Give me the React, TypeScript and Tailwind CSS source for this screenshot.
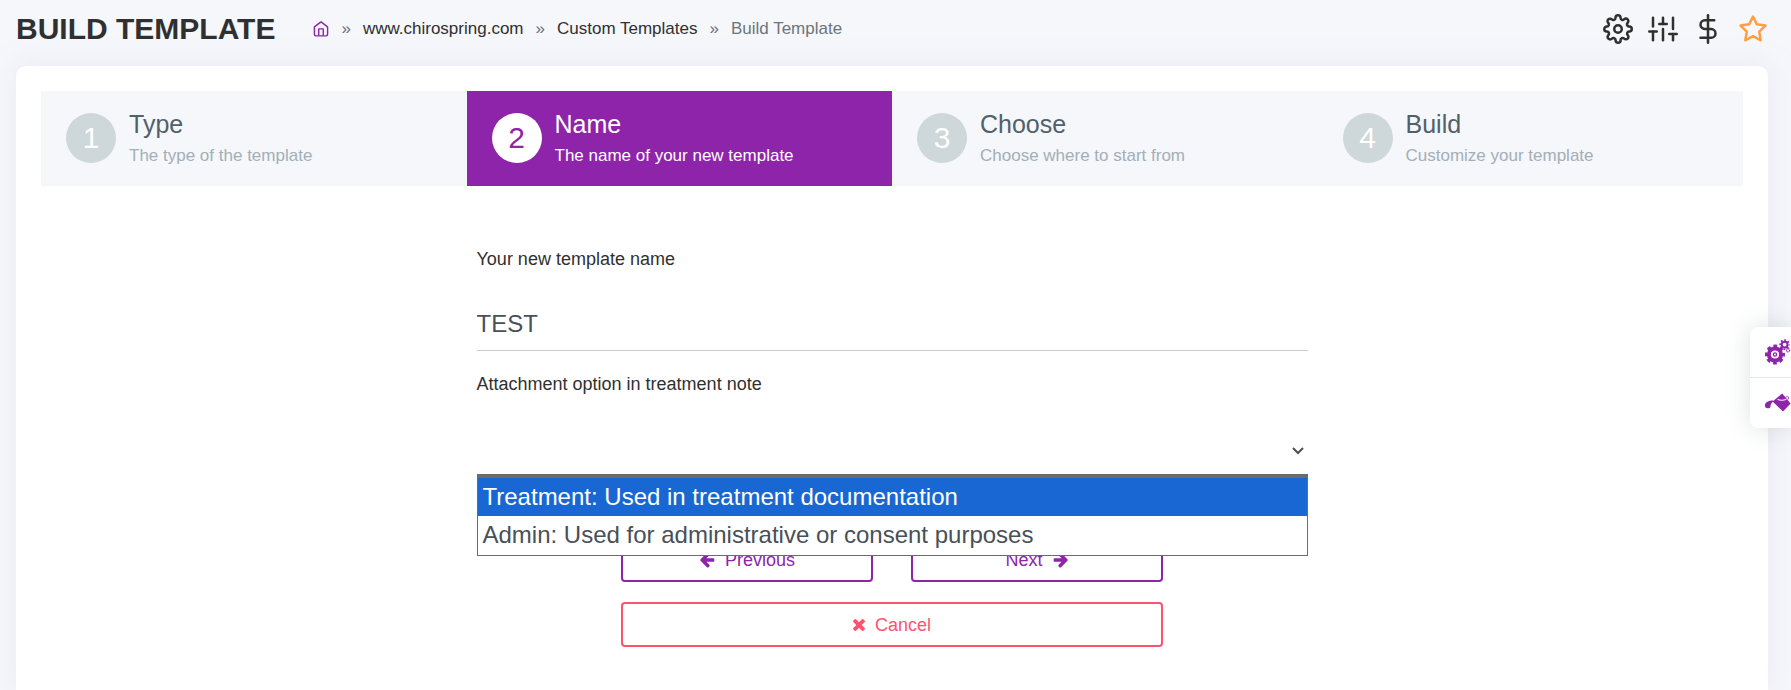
import { useState } from "react";
import { FiDollarSign, FiSettings, FiSliders, FiStar } from "react-icons/fi";

const STEPS = [
  { title: "Type", description: "The type of the template" },
  { title: "Name", description: "The name of your new template" },
  { title: "Choose", description: "Choose where to start from" },
  { title: "Build", description: "Customize your template" },
];

const ATTACHMENT_OPTIONS = [
  { value: "treatment", label: "Treatment: Used in treatment documentation" },
  { value: "admin", label: "Admin: Used for administrative or consent purposes" },
];

function HomeIcon() {
  return (
    <svg viewBox="0 0 16 17" className="size-4" fill="none" stroke="currentColor" strokeWidth="1.5" strokeLinejoin="round">
      <path d="M1 6.2 8 1l7 5.2v8a1.6 1.6 0 0 1-1.6 1.6H2.6A1.6 1.6 0 0 1 1 14.2z" />
      <path d="M5.6 15.8V8.4h4.8v7.4" />
    </svg>
  );
}

function ArrowIcon({ className = "" }: { className?: string }) {
  return (
    <svg viewBox="0 128 1536 1664" className={`size-4 ${className}`} fill="currentColor">
      <path d="M1536 896v128q0 53-32.5 90.5t-84.5 37.5h-704l293 294q38 36 38 90t-38 90l-75 76q-37 37-90 37-52 0-91-37l-651-652q-37-37-37-90 0-52 37-91l651-650q38-38 91-38 52 0 90 38l75 74q38 38 38 91t-38 91l-293 293h704q52 0 84.5 37.5t32.5 90.5z" />
    </svg>
  );
}

function TimesIcon() {
  return (
    <svg viewBox="110 366 1188 1188" className="size-3" fill="currentColor">
      <path d="M1298 1322q0 40-28 68l-136 136q-28 28-68 28t-68-28l-294-294-294 294q-28 28-68 28t-68-28l-136-136q-28-28-28-68t28-68l294-294-294-294q-28-28-28-68t28-68l136-136q28-28 68-28t68 28l294 294 294-294q28-28 68-28t68 28l136 136q28 28 28 68t-28 68l-294 294 294 294q28 28 28 68z" />
    </svg>
  );
}

function GearsIcon() {
  return (
    <svg viewBox="0 0 26 26" className="h-[26px] w-[26px]" fill="none" stroke="currentColor">
      <circle cx="10" cy="15.5" r="8.6" strokeWidth="2.8" strokeDasharray="3.8 2.954" strokeDashoffset="1.9" />
      <circle cx="10" cy="15.5" r="6.1" strokeWidth="4" />
      <circle cx="10" cy="15.5" r="1.6" strokeWidth="1.3" />
      <circle cx="19.6" cy="5.6" r="4.5" strokeWidth="1.6" strokeDasharray="1.8 1.734" strokeDashoffset="0.9" />
      <circle cx="19.6" cy="5.6" r="2.9" strokeWidth="2" />
      <circle cx="23" cy="11.2" r="1.6" strokeWidth="1.2" strokeDasharray="1.2 0.5" />
    </svg>
  );
}

function PaintIcon() {
  return (
    <svg viewBox="0 0 26 20" className="h-5 w-[26px]" fill="currentColor">
      <path d="M7.6 8.5 17.2.6 25.6 10.4 18 18.6z" />
      <path d="M8.2 7.6C3.6 7.6 0 9.6 0 12.4a2.8 2.8 0 0 0 5.6.3c0-1.6 1-3 2.6-4.2z" />
      <path d="M12.6 6.6c3 1 6.4.8 9-.4" fill="none" stroke="white" strokeWidth="1.1" />
      <circle cx="22.2" cy="5" r="1.5" fill="white" stroke="currentColor" strokeWidth="0.7" />
    </svg>
  );
}

function Header() {
  return (
    <header className="flex h-[66px] items-center justify-between pb-2 pl-4 pr-[23px]">
      <div className="flex items-center">
        <h1 className="text-3xl font-bold">BUILD TEMPLATE</h1>
        <nav aria-label="Breadcrumb" className="ml-[38px] flex items-center gap-3 text-[17px]">
          <a href="#home" aria-label="Home" className="text-[#8e24aa]">
            <HomeIcon />
          </a>
          <span className="text-[#6b6f82]">»</span>
          <a href="#site">www.chirospring.com</a>
          <span className="text-[#6b6f82]">»</span>
          <a href="#templates">Custom Templates</a>
          <span className="text-[#6b6f82]">»</span>
          <span className="text-[#6c757d]">Build Template</span>
        </nav>
      </div>
      <div className="flex items-center gap-[15px] text-3xl">
        <button type="button" aria-label="Settings"><FiSettings /></button>
        <button type="button" aria-label="Preferences"><FiSliders /></button>
        <button type="button" aria-label="Billing"><FiDollarSign /></button>
        <button type="button" aria-label="Favorite" className="text-[#ff9f43]"><FiStar /></button>
      </div>
    </header>
  );
}

function Steps({ current }: { current: number }) {
  return (
    <ol className="grid grid-cols-4 bg-[#f5f7fb]">
      {STEPS.map((step, i) => {
        const active = i === current;
        return (
          <li
            key={step.title}
            aria-current={active ? "step" : undefined}
            className={`flex h-[95px] items-center gap-[13px] px-[25px] pb-px ${active ? "bg-[#8e24aa] text-white" : "text-[#526069]"}`}
          >
            <span
              className={`flex size-[50px] shrink-0 items-center justify-center rounded-full pb-px text-3xl ${
                active ? "bg-white text-[#8e24aa]" : "bg-[#ced7d9] text-white"
              }`}
            >
              {i + 1}
            </span>
            <div>
              <div className="text-[25px] leading-9">{step.title}</div>
              <div className={`text-[17px] leading-7 ${active ? "" : "text-[#a3afb7]"}`}>{step.description}</div>
            </div>
          </li>
        );
      })}
    </ol>
  );
}

function AttachmentSelect() {
  const [value, setValue] = useState("");
  const [open, setOpen] = useState(true);
  const [highlighted, setHighlighted] = useState(0);

  return (
    <div className="relative">
      <select
        id="attachment"
        value={value}
        onChange={(e) => setValue(e.target.value)}
        className="block h-[55px] w-full appearance-none border-b-[3px] border-[#6b6b6b] bg-transparent text-2xl text-[#495057] outline-none"
      >
        <option value="" />
        {ATTACHMENT_OPTIONS.map((o) => (
          <option key={o.value} value={o.value}>
            {o.label}
          </option>
        ))}
      </select>
      <svg
        viewBox="0 0 12 8"
        className="pointer-events-none absolute right-1 top-[25px] h-2 w-3"
        fill="none"
        stroke="#495057"
        strokeWidth="2"
      >
        <path d="m1 1 5 5 5-5" />
      </svg>
      {open && (
        <ul role="listbox" className="absolute inset-x-0 top-full z-10 border border-[#6b6b6b] bg-white pb-px text-2xl text-[#495057]">
          {ATTACHMENT_OPTIONS.map((o, i) => (
            <li
              key={o.value}
              role="option"
              aria-selected={i === highlighted}
              onMouseEnter={() => setHighlighted(i)}
              onClick={() => {
                setValue(o.value);
                setOpen(false);
              }}
              className={`h-[38px] px-[5px] leading-[38px] ${i === highlighted ? "bg-[#1967d2] text-white" : ""}`}
            >
              {o.label}
            </li>
          ))}
        </ul>
      )}
    </div>
  );
}

function NameForm() {
  return (
    <form className="mx-auto mt-[59px] w-1/2 px-[10px] text-lg" onSubmit={(e) => e.preventDefault()}>
      <label htmlFor="name" className="block leading-7">
        Your new template name
      </label>
      <input
        id="name"
        defaultValue="TEST"
        className="mt-6 block h-[54px] w-full border-b border-[#cccccc] text-2xl text-[#495057] outline-none"
      />
      <label htmlFor="attachment" className="mb-6 mt-[19px] block leading-7">
        Attachment option in treatment note
      </label>
      <AttachmentSelect />
      <div className="mx-auto mt-[60px] grid max-w-[542px] grid-cols-2 gap-x-[38px] gap-y-5 text-[#8e24aa]">
        <button type="button" className="flex h-[45px] items-center justify-center gap-[10px] rounded border-2 border-[#8e24aa]">
          <ArrowIcon />
          Previous
        </button>
        <button type="submit" className="flex h-[45px] items-center justify-center gap-[10px] rounded border-2 border-[#8e24aa]">
          Next
          <ArrowIcon className="-scale-x-100" />
        </button>
        <button
          type="button"
          className="col-span-2 flex h-[45px] items-center justify-center gap-[10px] rounded border-2 border-[#ff5270] text-[#ff5270]"
        >
          <TimesIcon />
          Cancel
        </button>
      </div>
    </form>
  );
}

function SidePanel() {
  return (
    <aside className="fixed right-0 top-[327px] w-[41px] divide-y divide-[#e4e5ee] overflow-hidden rounded-l-lg bg-white text-[#8e24aa] shadow-[0_0_24px_rgba(70,90,90,0.18)]">
      <button type="button" aria-label="Page settings" className="flex h-[51px] w-full items-center pl-[15px]">
        <GearsIcon />
      </button>
      <button type="button" aria-label="Theme colors" className="flex h-[50px] w-full items-center pl-[15px]">
        <PaintIcon />
      </button>
    </aside>
  );
}

export default function App() {
  return (
    <div className="flex min-h-screen flex-col overflow-hidden bg-[#f5f7fb] font-['Liberation_Sans',Arial,sans-serif] text-[#303030]">
      <Header />
      <main className="ml-4 mr-[23px] flex-1 rounded-t-[10px] bg-white p-[25px] pb-10 shadow-[0_0_25px_rgba(230,215,240,0.5)]">
        <Steps current={1} />
        <NameForm />
      </main>
      <SidePanel />
    </div>
  );
}
